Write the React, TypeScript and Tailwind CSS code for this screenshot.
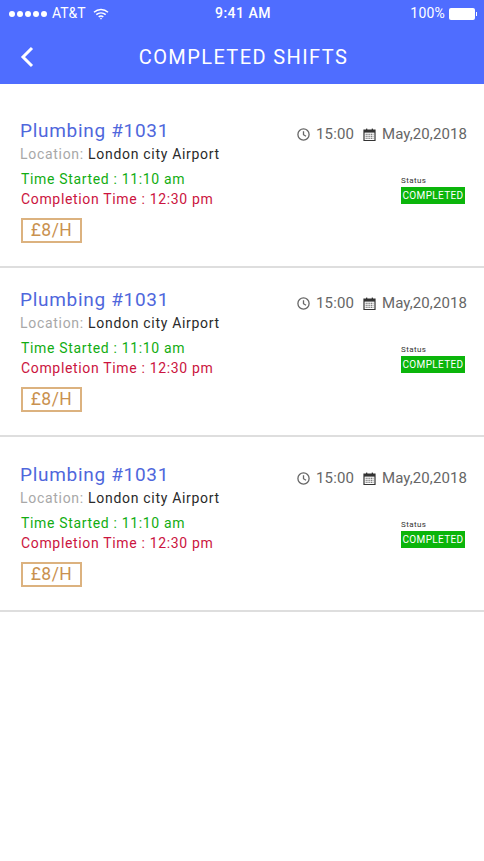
const font = { fontFamily: 'Roboto, sans-serif' };

function Clock() {
  return (
    <svg width="13" height="13" viewBox="0 0 13 13" fill="none" stroke="#666" strokeWidth="1.3" className="shrink-0">
      <circle cx="6.5" cy="6.5" r="5.6" />
      <path d="M6.5 3.2V6.7L9 8.3" />
    </svg>
  );
}

function Cal() {
  return (
    <svg width="13" height="13" viewBox="0 0 13 13" className="shrink-0">
      <path d="M1 2h11v10.5H1z" fill="none" stroke="#333" strokeWidth="1.2" />
      <rect x="1" y="2" width="11" height="2.6" fill="#333" />
      <rect x="3" y="0.6" width="1.3" height="2" fill="#333" />
      <rect x="8.7" y="0.6" width="1.3" height="2" fill="#333" />
      <path d="M2.6 6.3h7.8M2.6 8.2h7.8M2.6 10.2h7.8" stroke="#555" strokeWidth="1.1" strokeDasharray="1.2 .6" />
    </svg>
  );
}

function Card({ pt }: { pt: string }) {
  return (
    <div className={`border-b-2 border-[#dedede] pl-5 pr-[17px] ${pt} pb-[23px]`}>
      <div className="flex items-start justify-between">
        <div>
          <div className="text-[19px] leading-[24px] tracking-[0.7px] text-[#4f67dc]">Plumbing #1031</div>
          <div className="mt-[1px] text-[14px] leading-[20px] tracking-[0.7px] text-[#2a2a2a]">
            <span className="text-[#a8a8a8]">Location:</span> London city Airport
          </div>
        </div>
        <div className="flex items-center pt-[5px] text-[15px] leading-[20px] tracking-[0.1px] text-[#666]">
          <Clock />
          <span className="ml-[6px]">15:00</span>
          <span className="ml-[9px]"><Cal /></span>
          <span className="ml-[6px]">May,20,2018</span>
        </div>
      </div>
      <div className="mt-[5px] flex items-start justify-between">
        <div className="pl-px">
          <div className="text-[14px] leading-[20px] tracking-[0.66px] text-[#12ad12]">Time Started : 11:10 am</div>
          <div className="text-[14px] leading-[20px] tracking-[0.66px] text-[#cb1440]">Completion Time : 12:30 pm</div>
        </div>
        <div className="mr-[2px] mt-[7px] w-[64px]">
          <div className="text-[8px] leading-[10px] tracking-[0.4px] text-[#333]">Status</div>
          <div className="mt-px flex h-[17px] items-center justify-center bg-[#0bb50b] text-[10px] tracking-[0.35px] text-white">COMPLETED</div>
        </div>
      </div>
      <div className="ml-px mt-[9px] flex h-[25px] w-[61px] items-center justify-center border-2 border-[#dcb27f] text-[17.5px] tracking-[0.5px] text-[#c9914f]">£8/H</div>
    </div>
  );
}

export default function App() {
  return (
    <div className="min-h-[861px] bg-white" style={font}>
      <header className="h-[84px] bg-[#4f6dff] text-white">
        <div className="flex h-[26px] items-center justify-between pl-[9px] pr-[7px] pt-[1px] text-[14px]">
          <div className="flex w-[160px] items-center">
            <div className="flex gap-[2px]">
              {[0, 1, 2, 3, 4].map((i) => (
                <span key={i} className="h-[6px] w-[6px] rounded-full bg-white" />
              ))}
            </div>
            <span className="ml-[5px]">AT&amp;T</span>
            <svg width="16" height="12" viewBox="0 0 16 12" fill="none" stroke="white" strokeWidth="1.5" className="ml-[7px]">
              <path d="M1 4.2C5 .6 11 .6 15 4.2M3.3 6.6C6 4.4 10 4.4 12.7 6.6M5.7 8.9C7 7.9 9 7.9 10.3 8.9" />
              <circle cx="8" cy="10.6" r="0.8" fill="white" stroke="none" />
            </svg>
          </div>
          <span className="font-medium tracking-[0.5px]">9:41 AM</span>
          <div className="flex w-[160px] items-center justify-end">
            <span className="mr-[4px] tracking-[0.2px]">100%</span>
            <span className="h-[12px] w-[26px] rounded-[2px] bg-white" />
            <span className="ml-[1px] h-[4px] w-[1px] bg-white" />
          </div>
        </div>
        <div className="relative flex h-[58px] items-center justify-center pl-[3px] pt-[4px]">
          <svg width="16" height="24" viewBox="0 0 16 24" fill="none" stroke="white" strokeWidth="3" className="absolute left-[19px] top-[19px]">
            <path d="M13 3L4 12l9 9" />
          </svg>
          <span className="text-[20px] tracking-[1.4px]">COMPLETED SHIFTS</span>
        </div>
      </header>
      <Card pt="pt-[35px]" />
      <Card pt="pt-[20px]" />
      <Card pt="pt-[26px]" />
    </div>
  );
}
